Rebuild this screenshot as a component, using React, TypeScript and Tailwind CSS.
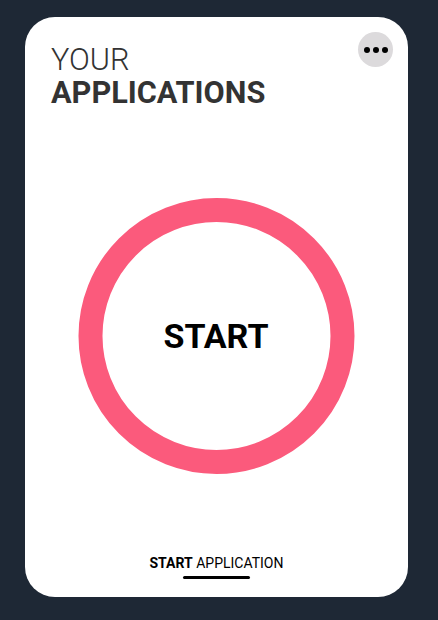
export default function App() {
  return (
    <div className="w-[438px] h-[620px] bg-[#1e2835] pt-[17px] pl-[25px] overflow-hidden" style={{ fontFamily: "Roboto, sans-serif" }}>
      <div className="relative w-[383px] h-[580px] bg-white rounded-[30px] flex flex-col items-center">
        <button className="absolute top-[15px] right-[15px] w-[35px] h-[35px] rounded-full bg-[#dcdadc] flex items-center justify-center gap-[3px]">
          <span className="w-[6px] h-[6px] rounded-full bg-black" />
          <span className="w-[6px] h-[6px] rounded-full bg-black" />
          <span className="w-[6px] h-[6px] rounded-full bg-black" />
        </button>
        <div className="self-start pl-[26px] pt-[26px] text-[30.7px] leading-[33px] text-[#333333] h-[181px]">
          <div className="font-light">YOUR</div>
          <div className="font-bold">APPLICATIONS</div>
        </div>
        <div className="w-[276px] h-[276px] rounded-full border-[24px] border-[#fb5a7c] flex items-center justify-center -translate-x-[0.5px]">
          <span className="text-[34px] font-bold text-black">START</span>
        </div>
        <div className="mt-auto flex flex-col items-center pb-[18px]">
          <div className="text-[14px] leading-[16px] text-black"><span className="font-bold">START</span> APPLICATION</div>
          <div className="w-[67px] h-[3px] mt-[5px] rounded-full bg-black" />
        </div>
      </div>
    </div>
  );
}
